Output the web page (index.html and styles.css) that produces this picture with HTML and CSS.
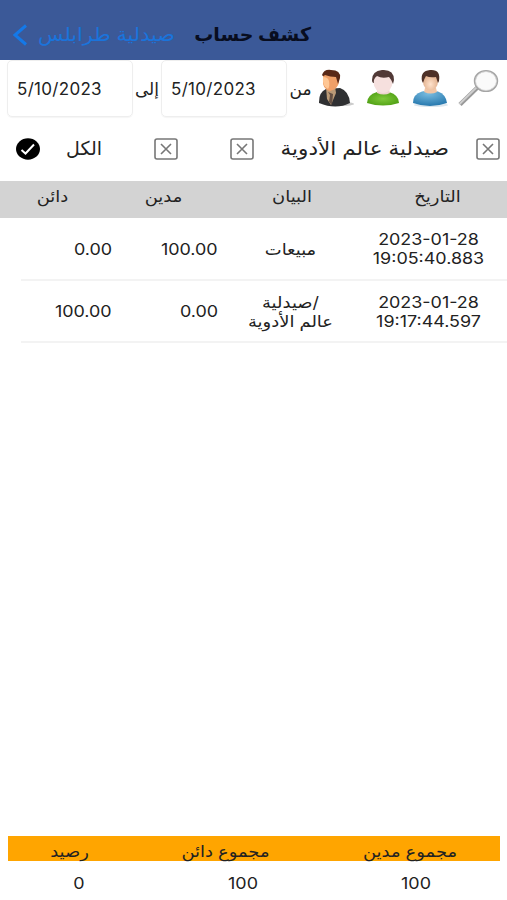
FILE: index.html
```html
<!DOCTYPE html>
<html lang="ar" dir="rtl">
<head>
  <meta charset="UTF-8">
  <meta name="viewport" content="width=device-width, initial-scale=1.0">
  <title>كشف حساب</title>
  <link rel="stylesheet" href="styles.css">
</head>
<body>
  <header class="navbar">
    <h1 class="title">كشف حساب</h1>
    <a class="back">
      <span>صيدلية طرابلس</span>
      <svg width="16" height="22" viewBox="0 0 16 22"><path d="M14 1.500 3 11l11 9.500" fill="none" stroke="#1479e8" stroke-width="3"/></svg>
    </a>
  </header>

  <!-- Date range and actions -->
  <div class="toolbar">
    <svg class="icon search" viewBox="0 0 44 42">
      <path d="M22 18 4 35.500" stroke="#999" stroke-width="4.500"/>
      <path d="M21 18 3.500 35" stroke="#cfcfcf" stroke-width="1.800"/>
      <ellipse cx="30" cy="12" rx="11.300" ry="10.200" fill="#fafafa" stroke="#a5a5a5" stroke-width="1.800"/>
      <ellipse cx="30" cy="12" rx="10.500" ry="9.400" fill="none" stroke="#ddd" stroke-width="0.800"/>
    </svg>
    <svg class="icon" viewBox="0 0 38 42">
      <defs>
        <radialGradient id="blue" cx="0.45" cy="0.2" r="0.8">
          <stop offset="0" stop-color="#79bce0"/><stop offset="1" stop-color="#2678ae"/>
        </radialGradient>
        <radialGradient id="skin" cx="0.5" cy="0.65" r="0.6">
          <stop offset="0" stop-color="#ffe2cc"/><stop offset="1" stop-color="#dda985"/>
        </radialGradient>
      </defs>
      <ellipse cx="20" cy="36" rx="17" ry="2" fill="#dbe6ee"/>
      <path d="M2 34Q2 25 11 22.500q8-2 16 0 8 3 9 11.500-17 6-34 0Z" fill="url(#blue)"/>
      <path d="M14 19h11l1 4q-6 3-13 0Z" fill="#f0c5a6"/>
      <ellipse cx="19.500" cy="12.500" rx="7.500" ry="9" fill="url(#skin)"/>
      <path d="M11 12Q9 2 19 1q11-1 9 11l-1 2-2-6q-6 1-10-1-2 3-3 7Z" fill="#4d3027"/>
    </svg>
    <svg class="icon" viewBox="0 0 38 42">
      <defs>
        <radialGradient id="green" cx="0.5" cy="0.5" r="0.6">
          <stop offset="0" stop-color="#7fc83a"/><stop offset="1" stop-color="#4d9e12"/>
        </radialGradient>
      </defs>
      <path d="M3 34Q3 26 13 23h12q10 3 10 11-16 5-32 0Z" fill="url(#green)"/>
      <path d="M13 20h12l1 4q-6 3-13 0Z" fill="#eed3d0"/>
      <ellipse cx="19" cy="13" rx="9.500" ry="11" fill="#f6e0de"/>
      <path d="M8 11Q8 2 18 1q12-1 12 10l-1 4q-2-5-4-7-7 2-12-1-4 3-3 7-2 0-2-3Z" fill="#513936"/>
    </svg>
    <svg class="icon" viewBox="0 0 38 42">
      <ellipse cx="24" cy="35" rx="13" ry="2" fill="#ccc"/>
      <path d="M2 33q0-10 7-13l14-1q9 3 10 15-14 7-31 0Z" fill="#2f3032"/>
      <path d="M9 18l9-1 1 7-5 12-4-6Z" fill="#b99a77"/>
      <path d="M11 23l2 3-1 7 3 3 1-11Z" fill="#645044"/>
      <path d="M6 5q6-3 13-1 4 3 3 9-1 7-9 9-8-2-7-11Z" fill="#ef9f68"/>
      <path d="M6 8q5 0 6 4 1 5-1 8-6-3-5-12Z" fill="#ffc795"/>
      <path d="M5 6Q7 0 14 1q10 0 9 8l-2 6-2-7q-6 0-11-2-2 2-3 0Z" fill="#592817"/>
    </svg>
    <span class="label from">من</span>
    <div class="date-input" dir="ltr">5/10/2023</div>
    <span class="label to">إلى</span>
    <div class="date-input" dir="ltr">5/10/2023</div>
  </div>

  <!-- Account filters -->
  <div class="filters">
    <svg class="box" viewBox="0 0 24 22"><rect x="1" y="1" width="22" height="20" rx="2"/><path d="m7 6 10 10M17 6 7 16"/></svg>
    <span class="account">صيدلية عالم الأدوية</span>
    <svg class="box" viewBox="0 0 24 22"><rect x="1" y="1" width="22" height="20" rx="2"/><path d="m7 6 10 10M17 6 7 16"/></svg>
    <svg class="box" viewBox="0 0 24 22"><rect x="1" y="1" width="22" height="20" rx="2"/><path d="m7 6 10 10M17 6 7 16"/></svg>
    <span class="all">الكل</span>
    <svg class="check" viewBox="0 0 24 22"><ellipse cx="12" cy="11" rx="12" ry="10.700"/><path d="m5.500 12 4 3.500 8.500-9"/></svg>
  </div>

  <div class="grid-row table-head">
    <span>التاريخ</span>
    <span>البيان</span>
    <span>مدين</span>
    <span>دائن</span>
  </div>
  <main class="entries">
    <div class="grid-row entry">
      <span class="date" dir="ltr">2023-01-28<br>19:05:40.883</span>
      <span class="desc">مبيعات</span>
      <span class="amount" dir="ltr">100.00</span>
      <span class="amount" dir="ltr">0.00</span>
    </div>
    <div class="grid-row entry">
      <span class="date" dir="ltr">2023-01-28<br>19:17:44.597</span>
      <span class="desc">/صيدلية<br>عالم الأدوية</span>
      <span class="amount" dir="ltr">0.00</span>
      <span class="amount" dir="ltr">100.00</span>
    </div>
  </main>

  <footer class="totals">
    <div class="totals-head">
      <span>مجموع مدين</span>
      <span>مجموع دائن</span>
      <span>رصيد</span>
    </div>
    <div class="totals-values">
      <span>100</span>
      <span>100</span>
      <span>0</span>
    </div>
  </footer>
</body>
</html>
```
FILE: styles.css
```css
* {
  box-sizing: border-box;
}

body {
  margin: 0;
  height: 100vh;
  display: flex;
  flex-direction: column;
  background: #fff;
  color: #222;
  font-family: Inter, "DejaVu Sans", sans-serif;
  font-size: 16px;
  white-space: nowrap;
  overflow: hidden;
}

svg {
  display: block;
  flex: none;
}

.navbar {
  height: 60px;
  flex: none;
  display: flex;
  align-items: center;
  padding: 9px 196px 0 12px;
  background: #3b5998;
}

.title {
  width: 115px;
  margin: 0;
  font-size: 19px;
  font-weight: bold;
  color: #080d20;
}

.back {
  margin-right: auto;
  display: flex;
  align-items: center;
  gap: 10px;
  color: #1a74dc;
  font-size: 19px;
}

.back span {
  transform: scaleX(1.09);
  transform-origin: left;
}

.toolbar {
  height: 60px;
  flex: none;
  display: flex;
  align-items: flex-start;
  padding: 0 7px;
}

.icon {
  width: 38px;
  height: 42px;
  margin: 9px 9px 0 0;
}

.icon.search {
  width: 44px;
  margin-right: 0;
}

.search + .icon {
  margin-right: 7px;
}

.label {
  flex: none;
  margin-top: 18px;
  font-size: 17px;
  line-height: 22px;
  text-align: center;
}

.from {
  width: 30px;
  padding-right: 3px;
}

.to {
  width: 28px;
}

.date-input {
  flex: none;
  width: 126px;
  height: 57px;
  padding: 0 9px;
  border: 1px solid #eee;
  border-radius: 5px;
  box-shadow: 0 1px 1px #f5f5f5;
  font-size: 17px;
  line-height: 56px;
  letter-spacing: 0.3px;
}

.filters {
  height: 61px;
  flex: none;
  display: flex;
  align-items: center;
  padding: 0 7px 4px 16px;
  font-size: 19px;
}

.box {
  width: 24px;
  height: 22px;
  fill: none;
  stroke: #777;
  stroke-width: 1.6;
}

.account {
  width: 168px;
  margin: 0 27px 0 27px;
  transform: scaleX(1.13);
  transform-origin: right;
}

.box + .box {
  margin-right: 52px;
}

.all {
  margin-right: auto;
  margin-left: 26px;
}

.check {
  width: 24px;
  height: 22px;
}

.check path {
  fill: none;
  stroke: #fff;
  stroke-width: 2;
}

.grid-row {
  display: grid;
  text-align: center;
}

/* Wide lettering in the table and totals */
.grid-row span,
.totals span {
  transform: scaleX(1.12);
}

.table-head {
  height: 37px;
  flex: none;
  background: #d3d3d3;
  line-height: 30px;
  grid-template-columns: 139px 152px 105px 117px;
}

.entries {
  flex: 1;
}

.entry {
  height: 62.5px;
  margin-left: 21px;
  padding-top: 2px;
  grid-template-columns: 157px 119px 106px 104px;
  align-items: center;
  border-bottom: 2px solid #f3f3f3;
  line-height: 19px;
}

.entry .amount {
  justify-self: start;
  margin-right: 13px;
  transform-origin: right;
}

.totals {
  padding: 0 7px 0 8px;
}

.totals-head,
.totals-values {
  display: grid;
  grid-template-columns: 180px 189px 123px;
  text-align: center;
}

.totals-head {
  height: 25px;
  line-height: 30px;
  background: #ffa500;
}

.totals-values {
  height: 39px;
  line-height: 45px;
  grid-template-columns: 168px 178px 150px;
}
```
